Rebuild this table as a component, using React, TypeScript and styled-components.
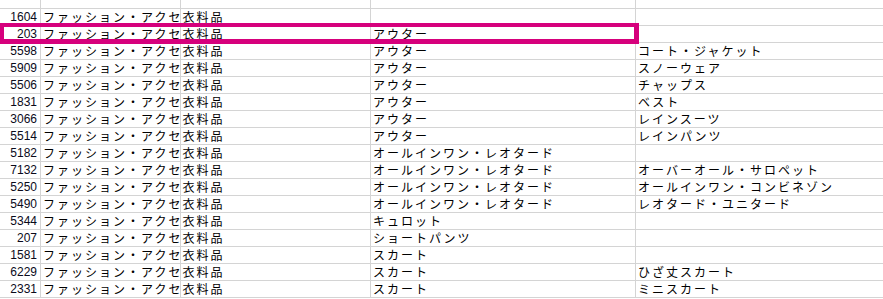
import React from 'react';
import styled, { createGlobalStyle } from 'styled-components';

const GlobalStyle = createGlobalStyle`
    html, body {
        margin: 0;
        padding: 0;
        background: #fff;
        overflow: hidden;
    }
`;

const Sheet = styled.div`
    position: relative;
    width: 883px;
    height: 299px;
    overflow: hidden;
    background: #fff;
`;

const Row = styled.div<{ $top?: boolean }>`
    display: grid;
    grid-template-columns: 41px 140px 190px 265px 1fr;
    height: ${props => props.$top ? 9 : 17}px;
    box-sizing: border-box;
    border-bottom: 1px solid #d4d4d4;
`;

const Cell = styled.div`
    box-sizing: border-box;
    border-right: 1px solid #d4d4d4;
    padding-left: 2px;
    white-space: nowrap;
    overflow: visible;
    font-family: "Noto Sans CJK JP", sans-serif;
    font-size: 12px;
    letter-spacing: 2px;
    line-height: 16px;
    color: #000;

    &:last-child {
        border-right: none;
    }
`;

const NumCell = styled(Cell)`
    text-align: right;
    padding-left: 0;
    padding-right: 3px;
    font-family: "Liberation Sans", Arial, sans-serif;
    letter-spacing: 0;
    color: #0a0a1a;
`;

// annotation frame drawn over the selected row
const Highlight = styled.div`
    position: absolute;
    left: 0;
    top: 23px;
    width: 639px;
    height: 21px;
    box-sizing: border-box;
    border: 4px solid #d6007c;
    border-bottom-width: 5px;
    border-right-width: 5px;
    pointer-events: none;
`;

const rows: [string, string, string, string][] = [
    ['1604', 'ファッション・アクセ衣料品', '', ''],
    ['203', 'ファッション・アクセ衣料品', 'アウター', ''],
    ['5598', 'ファッション・アクセ衣料品', 'アウター', 'コート・ジャケット'],
    ['5909', 'ファッション・アクセ衣料品', 'アウター', 'スノーウェア'],
    ['5506', 'ファッション・アクセ衣料品', 'アウター', 'チャップス'],
    ['1831', 'ファッション・アクセ衣料品', 'アウター', 'ベスト'],
    ['3066', 'ファッション・アクセ衣料品', 'アウター', 'レインスーツ'],
    ['5514', 'ファッション・アクセ衣料品', 'アウター', 'レインパンツ'],
    ['5182', 'ファッション・アクセ衣料品', 'オールインワン・レオタード', ''],
    ['7132', 'ファッション・アクセ衣料品', 'オールインワン・レオタード', 'オーバーオール・サロペット'],
    ['5250', 'ファッション・アクセ衣料品', 'オールインワン・レオタード', 'オールインワン・コンビネゾン'],
    ['5490', 'ファッション・アクセ衣料品', 'オールインワン・レオタード', 'レオタード・ユニタード'],
    ['5344', 'ファッション・アクセ衣料品', 'キュロット', ''],
    ['207', 'ファッション・アクセ衣料品', 'ショートパンツ', ''],
    ['1581', 'ファッション・アクセ衣料品', 'スカート', ''],
    ['6229', 'ファッション・アクセ衣料品', 'スカート', 'ひざ丈スカート'],
    ['2331', 'ファッション・アクセ衣料品', 'スカート', 'ミニスカート'],
];

const App: React.FC = () => {
    return (
        <>
            <GlobalStyle />
            <Sheet>
                <Row $top>
                    <NumCell />
                    <Cell />
                    <Cell />
                    <Cell />
                    <Cell />
                </Row>
                {rows.map(([id, cat, sub, item], i) => (
                    <Row key={i}>
                        <NumCell>{id}</NumCell>
                        <Cell>{cat}</Cell>
                        <Cell />
                        <Cell>{sub}</Cell>
                        <Cell>{item}</Cell>
                    </Row>
                ))}
                <Highlight />
            </Sheet>
        </>
    );
};

export default App;
